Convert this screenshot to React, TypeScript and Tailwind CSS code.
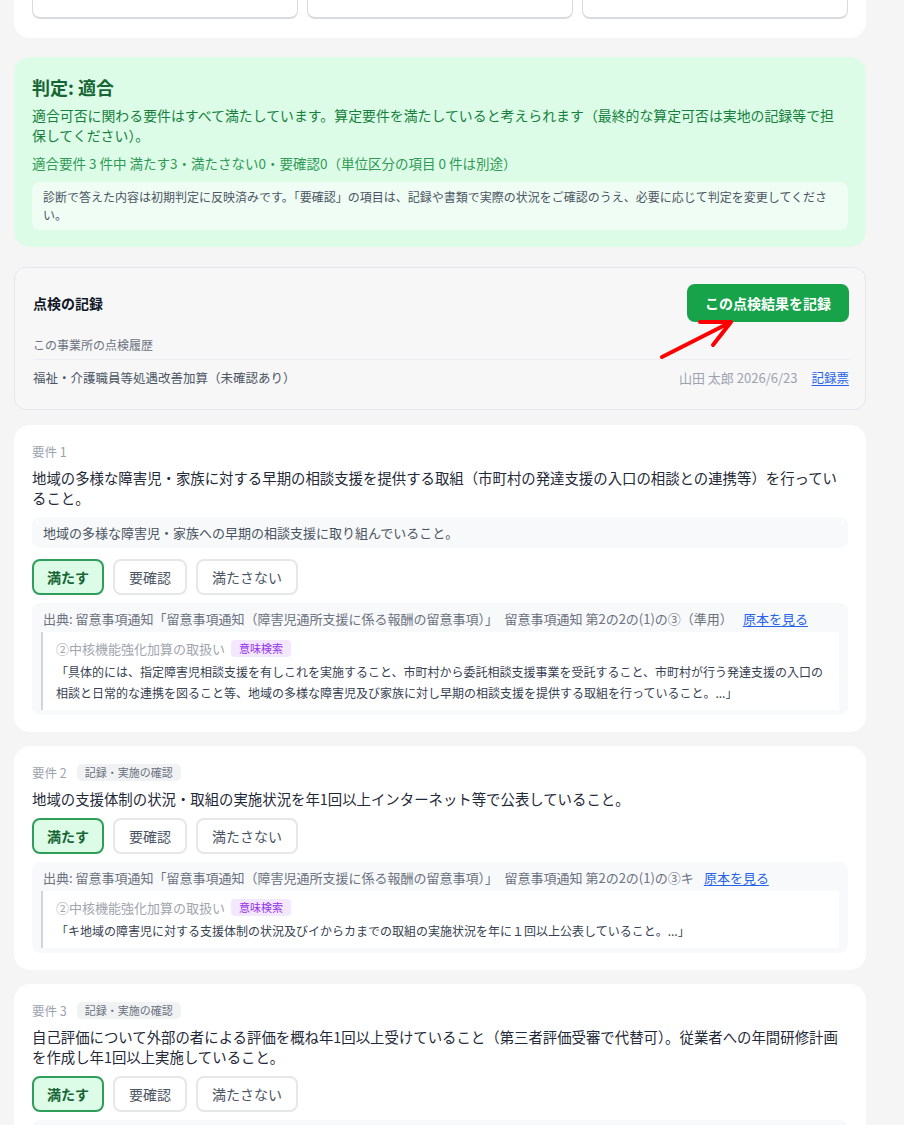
import React from 'react';

type Req = {
  no: number;
  tag?: string;
  title: string;
  desc?: string;
  source: string;
  quote: string;
};

const reqs: Req[] = [
  {
    no: 1,
    title:
      '地域の多様な障害児・家族に対する早期の相談支援を提供する取組（市町村の発達支援の入口の相談との連携等）を行っていること。',
    desc: '地域の多様な障害児・家族への早期の相談支援に取り組んでいること。',
    source: '出典: 留意事項通知「留意事項通知（障害児通所支援に係る報酬の留意事項）」　留意事項通知 第2の2の(1)の③（準用）',
    quote:
      '「具体的には、指定障害児相談支援を有しこれを実施すること、市町村から委託相談支援事業を受託すること、市町村が行う発達支援の入口の相談と日常的な連携を図ること等、地域の多様な障害児及び家族に対し早期の相談支援を提供する取組を行っていること。...」',
  },
  {
    no: 2,
    tag: '記録・実施の確認',
    title: '地域の支援体制の状況・取組の実施状況を年1回以上インターネット等で公表していること。',
    source: '出典: 留意事項通知「留意事項通知（障害児通所支援に係る報酬の留意事項）」　留意事項通知 第2の2の(1)の③キ',
    quote: '「キ地域の障害児に対する支援体制の状況及びイからカまでの取組の実施状況を年に１回以上公表していること。...」',
  },
  {
    no: 3,
    tag: '記録・実施の確認',
    title:
      '自己評価について外部の者による評価を概ね年1回以上受けていること（第三者評価受審で代替可）。従業者への年間研修計画を作成し年1回以上実施していること。',
    source: '出典: 留意事項通知「留意事項通知（障害児通所支援に係る報酬の留意事項）」　留意事項通知 第2の2の(1)の③ク',
    quote: '「ク自己評価について外部の者による評価を概ね年１回以上受けていること。...」',
  },
];

const RequirementCard: React.FC<{ req: Req }> = ({ req }) => {
  return (
    <div className="bg-white rounded-2xl px-[18px] pt-[18px] pb-[17px]">
      {/* label row */}
      <div className="flex items-center gap-[10px] h-[17px]">
        <span className="text-[12.5px] leading-[16px] text-[#9ca3af]">要件 {req.no}</span>
        {req.tag && (
          <span className="text-[11px] leading-[17px] h-[17px] px-[8px] rounded-[5px] bg-[#f1f2f4] text-[#6b7280]">
            {req.tag}
          </span>
        )}
      </div>

      <p className="mt-[8px] text-[14.4px] leading-[20px] text-[#1f2937]">{req.title}</p>

      {req.desc && (
        <div className="mt-[9px] h-[31px] flex items-center px-[11px] rounded-lg bg-[#f8f9fa] text-[13px] text-[#4b5563]">
          {req.desc}
        </div>
      )}

      <div className={`${req.desc ? 'mt-[11px]' : 'mt-[9px]'} flex gap-[9px]`}>
        <button className="h-[36px] px-[13px] rounded-lg border-2 border-[#2f9e5a] bg-[#dcfce7] text-[14px] font-bold text-[#166534]">
          満たす
        </button>
        <button className="h-[36px] px-[14px] rounded-lg border-2 border-[#e5e7eb] bg-white text-[14px] text-[#4b5563]">
          要確認
        </button>
        <button className="h-[36px] px-[14px] rounded-lg border-2 border-[#e5e7eb] bg-white text-[14px] text-[#4b5563]">
          満たさない
        </button>
      </div>

      {/* source */}
      <div className="mt-[8px] rounded-lg bg-[#f8f9fb] pl-[9px] pr-[9px] pt-[7px] pb-[5px]">
        <div className="text-[13px] leading-[17px] text-[#6b7280] pl-[2px]">
          {req.source}
          <a className="ml-[10px] text-[#2563eb] underline underline-offset-2">原本を見る</a>
        </div>
        <div className="mt-[5px] bg-white border-l-2 border-[#d1d5db] pl-[13px] pr-[9px] pt-[8px] pb-[7px]">
          <div className="flex items-center gap-[6px] h-[17px]">
            <span className="text-[13px] text-[#a1a6ae]">②中核機能強化加算の取扱い</span>
            <span className="text-[11px] leading-[17px] h-[17px] px-[8px] rounded-[4px] bg-[#f3e8ff] text-[#9333ea]">
              意味検索
            </span>
          </div>
          <p className="mt-[4px] text-[12px] leading-[21px] text-[#374151]">{req.quote}</p>
        </div>
      </div>
    </div>
  );
};

export default function App() {
  return (
    <div
      className="min-h-screen bg-[#f5f5f5] overflow-hidden"
      style={{ fontFamily: '"Noto Sans CJK JP", "Noto Sans", sans-serif' }}
    >
      <div className="w-[852px] ml-[14px] -mt-[100px] flex flex-col">
        {/* top (scrolled) card */}
        <div className="bg-white rounded-2xl px-[18px] pt-[19px] pb-[19px]">
          <div className="grid grid-cols-3 gap-[9px]">
            <div className="h-[100px] rounded-lg border border-[#d9dbe0] border-b-2 bg-white" />
            <div className="h-[100px] rounded-lg border border-[#d9dbe0] border-b-2 bg-white" />
            <div className="h-[100px] rounded-lg border border-[#d9dbe0] border-b-2 bg-white" />
          </div>
        </div>

        {/* judgement */}
        <div className="mt-[19px] rounded-2xl bg-[#dcfce7] px-[18px] pt-[18px] pb-[17px]">
          <div className="text-[18px] leading-[25px] font-bold text-[#166534]">判定: 適合</div>
          <p className="mt-[5px] mr-[8px] text-[13.9px] leading-[20px] text-[#15803d]">
            適合可否に関わる要件はすべて満たしています。算定要件を満たしていると考えられます（最終的な算定可否は実地の記録等で担保してください）。
          </p>
          <p className="mt-[9px] text-[13.5px] leading-[18px] text-[#2f9a55]">
            適合要件 3 件中 満たす3・満たさない0・要確認0（単位区分の項目 0 件は別途）
          </p>
          <div className="mt-[10px] rounded-lg bg-[#f0fdf4] pl-[11px] pr-[6px] py-[6px] text-[12px] leading-[18px] text-[#4b5563]">
            診断で答えた内容は初期判定に反映済みです。「要確認」の項目は、記録や書類で実際の状況をご確認のうえ、必要に応じて判定を変更してください。
          </div>
        </div>

        {/* inspection record */}
        <div className="relative mt-[20px] rounded-xl border border-[#e5e7eb] bg-[#f7f7f8] pl-[18px] pr-[16px] pt-[16px] pb-[23px]">
          <div className="flex items-center justify-between h-[38px]">
            <span className="text-[14px] font-bold text-[#111827]">点検の記録</span>
            <button className="h-[38px] w-[162px] rounded-lg bg-[#16a34a] text-white text-[14px] font-bold">
              この点検結果を記録
            </button>
          </div>
          <div className="mt-[15px] pb-[6px] border-b border-[#eceef1] text-[12px] leading-[16px] text-[#6b7280]">
            この事業所の点検履歴
          </div>
          <div className="pt-[10px] flex items-center justify-between text-[12.5px] leading-[16px]">
            <span className="text-[#4b5563]">福祉・介護職員等処遇改善加算（未確認あり）</span>
            <span className="flex items-center gap-[14px]">
              <span className="text-[#9ca3af] text-[13px]">山田 太郎 2026/6/23</span>
              <a className="text-[#2563eb] underline underline-offset-2">記録票</a>
            </span>
          </div>

          {/* annotation arrow */}
          <svg
            className="absolute left-[640px] top-[48px] w-[85px] h-[48px] pointer-events-none"
            viewBox="0 0 85 48"
            fill="none"
          >
            <path
              d="M7 41 L76 6 M45 6 L76 6 L58 29"
              stroke="#ff0000"
              strokeWidth="4"
              strokeLinecap="round"
              strokeLinejoin="round"
            />
          </svg>
        </div>

        <div className="mt-[15px] flex flex-col gap-[14px]">
          {reqs.map((r) => (
            <RequirementCard key={r.no} req={r} />
          ))}
        </div>
      </div>
    </div>
  );
}
